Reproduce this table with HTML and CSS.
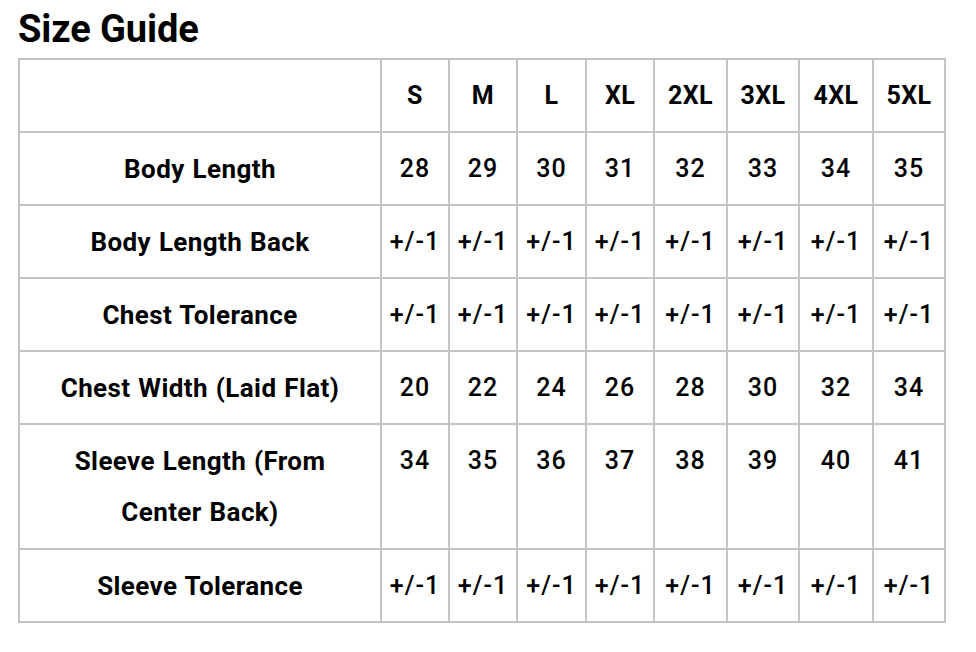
FILE: index.html
```html
<!DOCTYPE html>
<html>
<head>
<meta charset="utf-8">
<link rel="stylesheet" href="styles.css">
</head>
<body>
<div class="page">
  <h1 class="title">Size Guide</h1>
  <table class="size-table">
    <colgroup>
      <col class="c-label">
      <col class="c-68"><col class="c-68"><col class="c-69"><col class="c-68">
      <col class="c-73"><col class="c-72"><col class="c-74"><col class="c-72">
    </colgroup>
    <tr class="head">
      <th></th><th>S</th><th>M</th><th>L</th><th>XL</th><th>2XL</th><th>3XL</th><th>4XL</th><th>5XL</th>
    </tr>
    <tr>
      <th>Body Length</th><td>28</td><td>29</td><td>30</td><td>31</td><td>32</td><td>33</td><td>34</td><td>35</td>
    </tr>
    <tr>
      <th>Body Length Back</th><td>+/-1</td><td>+/-1</td><td>+/-1</td><td>+/-1</td><td>+/-1</td><td>+/-1</td><td>+/-1</td><td>+/-1</td>
    </tr>
    <tr>
      <th>Chest Tolerance</th><td>+/-1</td><td>+/-1</td><td>+/-1</td><td>+/-1</td><td>+/-1</td><td>+/-1</td><td>+/-1</td><td>+/-1</td>
    </tr>
    <tr>
      <th>Chest Width (Laid Flat)</th><td>20</td><td>22</td><td>24</td><td>26</td><td>28</td><td>30</td><td>32</td><td>34</td>
    </tr>
    <tr class="tall">
      <th>Sleeve Length (From<br>Center Back)</th><td>34</td><td>35</td><td>36</td><td>37</td><td>38</td><td>39</td><td>40</td><td>41</td>
    </tr>
    <tr>
      <th>Sleeve Tolerance</th><td>+/-1</td><td>+/-1</td><td>+/-1</td><td>+/-1</td><td>+/-1</td><td>+/-1</td><td>+/-1</td><td>+/-1</td>
    </tr>
  </table>
</div>
</body>
</html>
```
FILE: styles.css
```css
html, body {
  margin: 0;
  padding: 0;
  background: #ffffff;
}
.page {
  padding: 5px 0 0 18px;
  font-family: Roboto, "Liberation Sans", sans-serif;
  color: #000;
}
.title {
  margin: 0;
  font-size: 38px;
  line-height: 48px;
  font-weight: 700;
  letter-spacing: -0.1px;
}
.size-table {
  margin-top: 5px;
  border-collapse: collapse;
  table-layout: fixed;
  width: 926px;
  font-size: 25px;
}
.c-label { width: 362px; }
.c-68 { width: 68px; }
.c-69 { width: 69px; }
.c-72 { width: 72px; }
.c-73 { width: 73px; }
.c-74 { width: 74px; }
.size-table th,
.size-table td {
  border: 2px solid #c4c4c4;
  text-align: center;
  vertical-align: top;
  padding: 11px 0 10px;
  line-height: 50px;
  height: 50px;
  white-space: nowrap;
}
.size-table th {
  font-size: 26px;
  font-weight: 700;
  letter-spacing: 0.4px;
  word-spacing: 1px;
}
.size-table td {
  font-weight: 500;
  letter-spacing: 1px;
}
.tall th {
  line-height: 51px;
}
.head th {
  vertical-align: middle;
  font-size: 25px;
  letter-spacing: 0.4px;
}
```
